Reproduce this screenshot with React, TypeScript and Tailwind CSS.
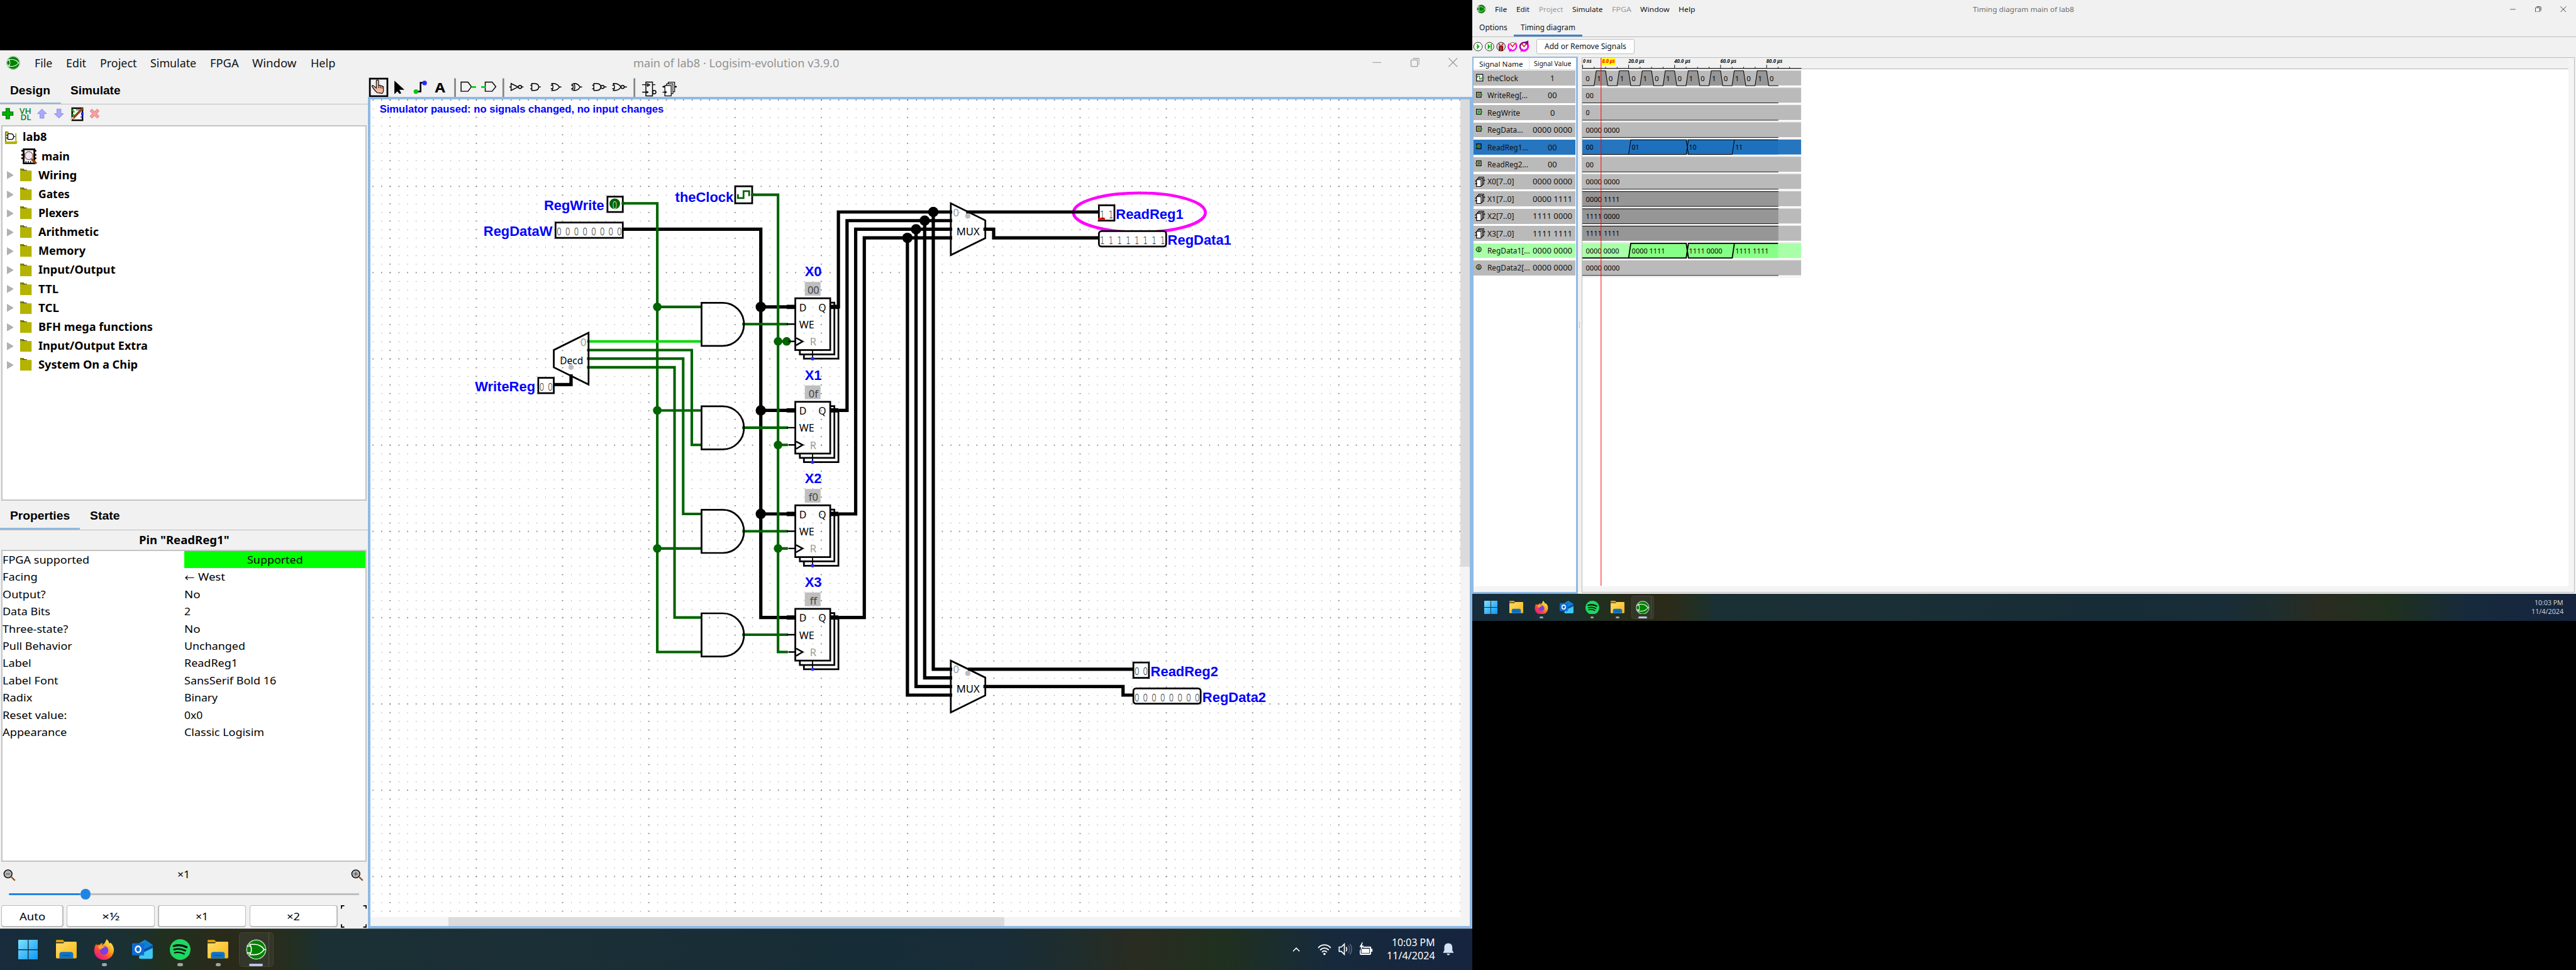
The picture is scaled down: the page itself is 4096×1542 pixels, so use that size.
import { useLayoutEffect, useRef, type ReactNode } from "react";

const UI = "font-['Noto_Sans','Open_Sans',sans-serif]";
const ARIAL = "font-['Liberation_Sans',Arial,sans-serif]";

/* Single-line text stretched horizontally to an exact width. */
function Fit({ w, className = "", children }: { w: number; className?: string; children: ReactNode }) {
  const outer = useRef<HTMLSpanElement>(null);
  const inner = useRef<HTMLSpanElement>(null);
  useLayoutEffect(() => {
    if (!outer.current || !inner.current) return;
    inner.current.style.transform = "none";
    const a = outer.current.getBoundingClientRect().width;
    const b = inner.current.getBoundingClientRect().width;
    if (b > 0) inner.current.style.transform = `scaleX(${a / b})`;
  }, [w, children]);
  return (
    <span ref={outer} style={{ width: w }} className={`inline-block shrink-0 whitespace-nowrap ${className}`}>
      <span ref={inner} className="inline-block origin-left">{children}</span>
    </span>
  );
}

function LogisimIcon({ className }: { className: string }) {
  return (
    <svg viewBox="0 0 24 24" className={className}>
      <circle cx="12" cy="12" r="11.6" fill="#e8f2e8" stroke="#3f7f3f" strokeWidth="0.5" />
      <circle cx="12" cy="12" r="10.6" fill="#008000" />
      <path d="M1 8 H6 M1 16 H6 M4.5 6 H10.5 C15 6 19.5 9 21 12 C19.5 15 15 18 10.5 18 H4.5 C7 14.5 7 9.5 4.5 6 Z M20.5 12 H23" fill="none" stroke="#fff" strokeWidth="1.2" />
    </svg>
  );
}

function WindowButtons({ className, gap }: { className: string; gap: string }) {
  return (
    <div className={`flex items-center ${gap}`}>
      <svg viewBox="0 0 16 16" className={className} fill="none" stroke="currentColor"><path d="M0.5 8 H15.5" /></svg>
      <svg viewBox="0 0 16 16" className={className} fill="none" stroke="currentColor" strokeWidth="1.2">
        <rect x="0.7" y="3.5" width="11.5" height="11.5" rx="1.5" />
        <path d="M4 0.8 H12.5 Q15.3 0.8 15.3 3.5 V12" />
      </svg>
      <svg viewBox="0 0 16 16" className={className} fill="none" stroke="currentColor" strokeWidth="1.2"><path d="M0.5 0.5 L15.5 15.5 M15.5 0.5 L0.5 15.5" /></svg>
    </div>
  );
}

/* ------------------------------------------------------------------ */
/* Taskbar                                                             */
/* ------------------------------------------------------------------ */

function WinIcon() {
  return (
    <svg viewBox="0 0 23 23" className="size-[23px]">
      <defs>
        <linearGradient id="win" x1="0" y1="0" x2="1" y2="1">
          <stop offset="0" stopColor="#7fe0ff" />
          <stop offset="1" stopColor="#0a97f5" />
        </linearGradient>
      </defs>
      <path d="M0 .8 Q0 0 .8 0 H11 V11 H0Z M12 0 H22.2 Q23 0 23 .8 V11 H12Z M0 12 H11 V23 H.8 Q0 23 0 22.2Z M12 12 H23 V22.2 Q23 23 22.2 23 H12Z" fill="url(#win)" />
    </svg>
  );
}

function FolderIcon() {
  return (
    <svg viewBox="0 0 24 22" className="h-[22px] w-[24px]">
      <defs>
        <linearGradient id="fold" x1="0" y1="0" x2="1" y2="1">
          <stop offset="0" stopColor="#ffdc6b" />
          <stop offset="1" stopColor="#fbb812" />
        </linearGradient>
      </defs>
      <path d="M0 1 Q0 0 1 0 H8 L10.5 3 H0Z" fill="#e09b00" />
      <path d="M0 4 H8.5 L10.5 2.2 H23 Q24 2.2 24 3.2 V20.5 Q24 21.5 23 21.5 H1 Q0 21.5 0 20.5Z" fill="url(#fold)" />
      <path d="M4 21.5 V17 Q4 14 7 14 H17 Q20 14 20 17 V21.5Z" fill="#0f73c8" />
      <path d="M7.5 18 H16.5" stroke="#0a4f91" strokeWidth="0.9" />
    </svg>
  );
}

function FirefoxIcon() {
  return (
    <svg viewBox="0 0 24 24" className="size-[24px]">
      <defs>
        <linearGradient id="ff" x1="0.85" y1="0.1" x2="0.2" y2="0.95">
          <stop offset="0" stopColor="#fff24a" />
          <stop offset="0.4" stopColor="#ff9a20" />
          <stop offset="0.7" stopColor="#ff4040" />
          <stop offset="1" stopColor="#e01890" />
        </linearGradient>
      </defs>
      <path d="M14.8 0 C17 1.5 18 4 18.2 5 C19.2 4.8 19.5 4 19.5 4 C22.5 7 23.6 10 23.4 13 C23 19.5 18 24 12 24 C5.5 24 .5 19.5 .5 13 C.5 9.500 1.800 7 3.200 5.200 L3.600 7.400 C4.500 6.500 6 6.300 7 6.600 C8 4.800 9.500 4.300 10.500 4.300 C10 5 9.700 5.800 9.800 6.600 C12 6 13.500 4 14.800 0Z" fill="url(#ff)" />
      <circle cx="12" cy="13" r="5" fill="#7a3fe0" />
      <path d="M5 8.500 C8 6.500 11 8.500 13.500 9 C11.500 10.200 9.500 10 8.500 12 C7.500 12.500 6 11 5 8.500Z" fill="#ffa52e" />
    </svg>
  );
}

function OutlookIcon() {
  return (
    <svg viewBox="0 0 24 22" className="h-[22px] w-[24px]">
      <path d="M5 6 L15 0 L24 6 V10 H5Z" fill="#28a8ea" />
      <path d="M9 5 L15 0 L24 6 L16 13 H10Z" fill="#0f7fd6" />
      <path d="M24 6 V10 L12 16 V12Z" fill="#0a4fa0" />
      <path d="M24 9.500 L10 16 L8 20 Q8 22 10 22 H22 Q24 22 24 20Z" fill="#3fc8f5" />
      <rect x="0" y="4" width="14" height="14" rx="1.200" fill="#0f6cd0" />
      <ellipse cx="7" cy="11" rx="3" ry="3.500" fill="none" stroke="#fff" strokeWidth="1.700" />
    </svg>
  );
}

function SpotifyIcon() {
  return (
    <svg viewBox="0 0 24 24" className="size-[24px]">
      <circle cx="12" cy="12" r="12" fill="#1ed760" />
      <g fill="none" stroke="#0b0b0b" strokeLinecap="round">
        <path d="M4.500 8 C9 6.500 15 7 19.500 9.300" strokeWidth="2.300" />
        <path d="M5 12 C9 10.800 14 11.300 18 13.300" strokeWidth="1.900" />
        <path d="M5.500 15.700 C9 14.700 13 15.200 16.600 17" strokeWidth="1.600" />
      </g>
    </svg>
  );
}

function TaskSlot({ children, dot = false }: { children: ReactNode; dot?: boolean }) {
  return (
    <div className="relative flex h-[48px] w-[44px] items-center justify-center">
      {children}
      {dot && <div className="absolute bottom-[5px] h-[3px] w-[6px] rounded-full bg-[#9ea5a5]" />}
    </div>
  );
}

function Taskbar({ tray = false }: { tray?: boolean }) {
  return (
    <div className={`flex h-[48px] w-full items-center ${UI} bg-[linear-gradient(90deg,#172b3c_0%,#182f36_6%,#1b3030_9%,#20301f_11%,#2a2a1a_15%,#2c2b1a_18%,#222f22_20%,#1a3034_22%,#1b2f36_36%,#162c36_60%,#182d37_68%,#1f2d2c_73%,#292c21_77%,#20301f_83%,#1b2e2a_86%,#172a3c_90%,#16243f_100%)]`}>
      <div className="flex items-center pl-[10.500px]">
        <TaskSlot><WinIcon /></TaskSlot>
        <div className="w-[0.500px]" />
        <TaskSlot><FolderIcon /></TaskSlot>
        <TaskSlot dot><FirefoxIcon /></TaskSlot>
        <TaskSlot><OutlookIcon /></TaskSlot>
        <TaskSlot dot><SpotifyIcon /></TaskSlot>
        <TaskSlot dot><FolderIcon /></TaskSlot>
        <div className="relative ml-[2px] flex h-[40px] w-[40px] items-center justify-center rounded-[4px] border border-[#414532] bg-[#34362a]">
          <div className="absolute right-[4px] top-0 h-full w-px bg-[#50523f]" />
          <LogisimIcon className="relative size-[24px]" />
          <div className="absolute bottom-0 h-[3px] w-[16px] rounded-full bg-[#b9c6ea]" />
        </div>
      </div>
      <div className="flex-1" />
      {tray && (
        <div className="flex items-center text-white">
          <svg viewBox="0 0 10 6" className="mr-[20px] h-[5px] w-[9px]" fill="none" stroke="currentColor" strokeWidth="1.300"><path d="M.5 5.500 L5 1 L9.500 5.500" /></svg>
          <svg viewBox="0 0 16 14" className="mr-[8px] h-[14px] w-[16px]" fill="none" stroke="currentColor" strokeWidth="1.300">
            <path d="M.8 5 C4.500 .5 11.500 .5 15.200 5 M3 7.600 C5.800 4.300 10.200 4.300 13 7.600 M5.200 10 C6.800 8 9.200 8 10.800 10" />
            <circle cx="8" cy="12" r="1.300" fill="currentColor" stroke="none" />
          </svg>
          <svg viewBox="0 0 16 16" className="mr-[8px] size-[16px]" fill="none" stroke="currentColor" strokeWidth="1.200">
            <path d="M1 5.500 H3.500 L7 2 V14 L3.500 10.500 H1Z M9 5.500 C10 7 10 9 9 10.500" />
            <path d="M11.500 3.500 C13.500 6 13.500 10 11.500 12.500 M13.500 2 C16 5 16 11 13.500 14" stroke="#5d6b80" strokeWidth="1" />
          </svg>
          <svg viewBox="0 0 16 16" className="mr-[16px] size-[16px]" fill="currentColor">
            <path d="M4 5 H13 Q14 5 14 6 V7.500 H15.500 V11 H14 V13 Q14 14.500 12.500 14.500 H2 Q.8 14.500 .8 13 V9 H2 V13 H12.500 V6.300 H5Z" />
            <rect x="2.800" y="7.500" width="9" height="4.800" />
            <path d="M3.500 0 L.5 5.500 H2.500 L1.500 9 L5.500 3.800 H3.300 L4.300 0Z" />
          </svg>
        </div>
      )}
      <div className={`flex flex-col items-end text-[11.500px] leading-[16px] ${tray ? "text-white" : "text-[#c8d0d3] mr-[22px]"}`}>
        <Fit w={50}>10:03 PM</Fit>
        <Fit w={56}>11/4/2024</Fit>
      </div>
      {tray && (
        <svg viewBox="0 0 14 16" className="mr-[21px] ml-[9px] h-[16px] w-[13px]" fill="#d6e2f5">
          <path d="M7 .5 C10.500 .5 12 3 12 6 V9.500 L13.500 12 V12.500 H.5 V12 L2 9.500 V6 C2 3 3.500 .5 7 .5Z M5 13.500 H9 Q8.500 15.500 7 15.500 Q5.500 15.500 5 13.500Z" />
        </svg>
      )}
    </div>
  );
}

/* ------------------------------------------------------------------ */
/* Left panel of the main window                                       */
/* ------------------------------------------------------------------ */

const MENU: [string, number, number][] = [
  ["File", 31, 55], ["Edit", 35, 59], ["Project", 64, 87.5], ["Simulate", 80, 104], ["FPGA", 50, 73], ["Window", 77, 102], ["Help", 43, 60],
];

const LIBS: [string, number][] = [
  ["Wiring", 67], ["Gates", 54.500], ["Plexers", 70.500], ["Arithmetic", 105], ["Memory", 82], ["Input/Output", 134],
  ["TTL", 35], ["TCL", 36], ["BFH mega functions", 199], ["Input/Output Extra", 190], ["System On a Chip", 173],
];

const PROPS: [string, number, string, number][] = [
  ["Output?", 75, "No", 28],
  ["Data Bits", 83, "2", 11],
  ["Three-state?", 114, "No", 28],
  ["Pull Behavior", 121, "Unchanged", 106],
  ["Label", 50, "ReadReg1", 93],
  ["Label Font", 97, "SansSerif Bold 16", 160],
  ["Radix", 52, "Binary", 58],
  ["Reset value:", 112, "0x0", 32],
  ["Appearance", 112, "Classic Logisim", 139],
];

function ExplorerTools() {
  return (
    <svg viewBox="0 182 180 36" className="h-[36px] w-[180px]">
      <path d="M10.500 189 H16.500 V195 H22.500 V201 H16.500 V207 H10.500 V201 H4.500 V195 H10.500Z" fill="#00b400" stroke="#007a00" strokeWidth="1.500" />
      <g className={UI} fill="#007a00" fontSize="14" fontWeight="500">
        <text x="34" y="198" textLength="20.500" lengthAdjust="spacingAndGlyphs">VH</text>
        <text x="35.500" y="209.500" textLength="18.500" lengthAdjust="spacingAndGlyphs">DL</text>
      </g>
      <path d="M73 190 L81 198 H76.500 V206 H69.500 V198 H65Z" fill="#a9a9ff" stroke="#8a8ae0" />
      <path d="M102.500 206 L94.500 198 H99 V190 H106 V198 H110.500Z" fill="#a9a9ff" stroke="#8a8ae0" />
      <rect x="125.500" y="188.500" width="18" height="21" fill="#fff" stroke="#000" strokeWidth="2.600" />
      <path d="M126 191 L129 196 M126 199 L129 202" stroke="#00c000" strokeWidth="3" />
      <path d="M143 196 V201 M142 203 V205" stroke="#2222ff" strokeWidth="4" />
      <path d="M132 191 H139" stroke="#888" strokeWidth="3" />
      <path d="M144 188.500 L127 206" stroke="#8b4513" strokeWidth="4" />
      <path d="M127 204 L123 209" stroke="#e8c8a0" strokeWidth="3" />
      <path d="M158 191.500 L171 204.500 M171 191.500 L158 204.500" stroke="#e07878" strokeWidth="5.500" />
      <path d="M158.700 192.200 L170.300 203.800 M170.300 192.200 L158.700 203.800" stroke="#ffa0a0" strokeWidth="3.500" />
    </svg>
  );
}

function Explorer() {
  return (
    <div className="ml-[2px] h-[653px] w-[636px] bg-[#c4c4c4] p-[2px]">
      <div className={`h-full bg-white pt-[2.500px] text-[18.500px] font-bold leading-[33px] text-black ${UI}`}>
        <div className="flex h-[33px] items-center pl-[4px]">
          <svg viewBox="0 0 24 24" className="mr-[7px] size-[24px]">
            <path d="M1 1 H6 L9 4 H3.500 V21 H1Z" fill="#8a8a00" />
            <rect x="3.500" y="4" width="16" height="14" fill="#fff" />
            <path d="M6 5 H11 Q16 5 16 10 Q16 15 11 15 H6Z M3 7.500 H6 M3 12.500 H6 M16 10 H19" fill="none" stroke="#000" strokeWidth="1.400" />
            <path d="M20 4 V18" stroke="#8a8a00" strokeWidth="1.500" />
            <path d="M1 19 L23 18 L21 23 H1Z" fill="#b3b300" />
          </svg>
          <Fit w={42}>lab8</Fit>
        </div>
        <div className="flex h-[33px] items-center pl-[33px]">
          <svg viewBox="0 0 28 28" className="mr-[7px] size-[28px]">
            <rect x="4" y="1.500" width="18.500" height="24.500" fill="#fff" stroke="#000" strokeWidth="3" />
            <path d="M0 4 H4 M0 11 H4 M0 17 H4 M23 4 H26 M23 11 H26 M23 17 H26" stroke="#000" strokeWidth="3" />
            <path d="M8 22 V25 M12 22 V25 M16 22 V25" stroke="#000" strokeWidth="1.500" />
            <circle cx="13" cy="12.500" r="7" fill="#e8e8ff" stroke="#a0643c" strokeWidth="1.600" />
            <path d="M18 18.500 L26 26.500" stroke="#8b4513" strokeWidth="4" />
          </svg>
          <Fit w={49}>main</Fit>
        </div>
        {LIBS.map(([name, w]) => (
          <div key={name} className="flex h-[33px] items-center pl-[7.500px]">
            <svg viewBox="0 0 12 14" className="mr-[12px] h-[14px] w-[12px]"><path d="M0 0 L12 7 L0 14Z" fill="#b0b0b0" /></svg>
            <svg viewBox="0 0 20 24" className="mr-[11px] h-[24px] w-[20px]">
              <path d="M0 0 H6 L9 4 H0Z" fill="#808000" />
              <path d="M5 3 H12" stroke="#222" strokeWidth="1.200" />
              <rect x="0" y="3.500" width="20" height="18.500" fill="#b3b300" />
            </svg>
            <Fit w={w}>{name}</Fit>
          </div>
        ))}
      </div>
    </div>
  );
}

function Magnifier({ plus = false }: { plus?: boolean }) {
  return (
    <svg viewBox="0 0 22 22" className="size-[22px]" fill="none">
      <circle cx="8.500" cy="9" r="7" fill="#b4b4b4" stroke="#000" strokeWidth="1.500" />
      <path d={plus ? "M5 9 H12 M8.500 5.500 V12.500" : "M5 9 H12"} stroke="#444" strokeWidth="1.200" />
      <path d="M14.500 14.500 L20.500 20.500" stroke="#8b4513" strokeWidth="2.500" />
    </svg>
  );
}

function Tabs({ first, w1, second, w2, width, pad }: { first: string; w1: number; second: string; w2: number; width: string; pad: string }) {
  return (
    <div className={`flex h-[51px] border-b border-[#bdbdbd] text-[20.500px] font-bold text-black ${ARIAL}`}>
      <div className={`flex flex-col ${width}`}>
        <div className="flex h-[47px] items-center pl-[18px] pt-[6px]"><Fit w={w1}>{first}</Fit></div>
        <div className="h-[3px] bg-[#93b9de]" />
      </div>
      <div className={`flex h-[47px] items-center pt-[6px] ${pad}`}><Fit w={w2}>{second}</Fit></div>
    </div>
  );
}

function ZoomButton({ width, w, children }: { width: string; w: number; children: string }) {
  return (
    <div className={`h-[38px] rounded-[4px] bg-[#bcbcbc] p-[1.500px] ${width}`}>
      <div className="flex h-full items-center justify-center rounded-[3px] bg-white"><Fit w={w}>{children}</Fit></div>
    </div>
  );
}

function LeftPanel() {
  return (
    <div className={`flex w-[640px] flex-col ${UI} text-black`}>
      <Tabs first="Design" w1={70} second="Simulate" w2={87} width="w-[106px]" pad="pl-[17px]" />
      <div className="h-[36px]"><ExplorerTools /></div>
      <Explorer />
      <Tabs first="Properties" w1={104} second="State" w2={52} width="w-[139px]" pad="pl-[17px]" />
      <div className="flex h-[34px] items-center justify-center text-[18.500px] font-bold"><Fit w={157}>Pin "ReadReg1"</Fit></div>
      <div className="ml-[2px] h-[542px] w-[636px] bg-[#c4c4c4] p-[2px]">
        <div className="h-full bg-white text-[18.500px] leading-[30px]">
          <div className="flex h-[30px]">
            <div className="w-[316px]"><Fit w={151}>FPGA supported</Fit></div>
            <div className="flex flex-1 justify-center bg-[#00ff00]"><Fit w={97}>Supported</Fit></div>
          </div>
          <div className="flex h-[30px]">
            <div className="w-[318px]"><Fit w={61}>Facing</Fit></div>
            <svg viewBox="0 0 16 12" className="mt-[11px] mr-[7px] h-[12px] w-[16px]" fill="none" stroke="#000" strokeWidth="1.300">
              <path d="M1 6 H16 M5 2.500 L1 6 L5 9.500" />
            </svg>
            <Fit w={47}>West</Fit>
          </div>
          {PROPS.map(([k, kw, v, vw]) => (
            <div key={k} className="flex h-[30px]">
              <div className="w-[317px]"><Fit w={kw}>{k}</Fit></div>
              <Fit w={vw}>{v}</Fit>
            </div>
          ))}
        </div>
      </div>
      <div className="flex h-[46px] items-center justify-between pl-[6px] pr-[8px] text-[18px]">
        <Magnifier /><Fit w={22}>×1</Fit><Magnifier plus />
      </div>
      <div className="flex h-[22px] items-center pl-[15px]">
        <div className="h-[3px] w-[125px] rounded bg-[#2284e2]" />
        <div className="size-[18px] rounded-full bg-[#2284e2]" />
        <div className="h-[3px] w-[467px] bg-[#bfbfbf]" />
      </div>
      <div className="flex gap-[6px] pl-[2px] pt-[8px] text-[18.500px]">
        <ZoomButton width="w-[108px]" w={45}>Auto</ZoomButton>
        <ZoomButton width="w-[153px]" w={31}>×½</ZoomButton>
        <ZoomButton width="w-[153px]" w={22}>×1</ZoomButton>
        <ZoomButton width="w-[153px]" w={23}>×2</ZoomButton>
        <svg viewBox="0 0 45 39" className="h-[39px] w-[45px]" fill="none" stroke="#000" strokeWidth="2">
          <path d="M1 6 V1 H6 M39 1 H44 V6 M44 33 V38 H39 M6 38 H1 V33" />
        </svg>
      </div>
    </div>
  );
}

/* ------------------------------------------------------------------ */
/* Circuit canvas                                                      */
/* ------------------------------------------------------------------ */

function ToolStrip() {
  return (
    <svg viewBox="640 131 560 38" className="h-[38px] w-[560px]" fill="none" stroke="#000" strokeWidth="1.600">
      <rect x="643.300" y="136.500" width="30.500" height="30.500" strokeWidth="3" />
      <path d="M656 161 C651 156 648 152 647 149 Q648.500 147.500 651 150 L654.500 153 V140 Q656.500 137.500 658.500 140 V148 L661 148 L664 149 L667 150.500 V157 Q667 160 665 162Z" fill="#f2b7a0" strokeWidth="1.200" />
      <path d="M658.500 148 V153 M661.500 149 V153 M664.500 150 V154" strokeWidth="1" />
      <path d="M686 140 V163.500 L691 158.500 L695 163 L698 162 L694.500 156 H703.500Z" fill="#000" stroke="none" />
      <path d="M723 159 H731.500 V143.500 H738" strokeWidth="2.800" />
      <circle cx="723.500" cy="159" r="4" fill="#00c800" stroke="none" />
      <circle cx="738.500" cy="144" r="4" fill="#2828ff" stroke="none" />
      <text x="756.500" y="160" textLength="18" lengthAdjust="spacingAndGlyphs" fontSize="24" fontWeight="700" fill="#000" stroke="none" className={UI}>A</text>
      <path d="M791.500 136 V169 M875.500 136 V169 M1103.500 136 V169" stroke="#858585" strokeWidth="3" />
      <path d="M802 142.500 H814 L820 150.500 L814 158.500 H802Z M844 142.500 H856 L862.500 150.500 L856 158.500 H844Z" />
      <path d="M820 151 H828 M837 151 H845" stroke="#00d200" strokeWidth="3" />
      <path d="M886 151 H889 M889 145 V157 L901 151Z M907.500 151 H910.500" />
      <circle cx="904.500" cy="151" r="2.800" />
      <path d="M925 145 H930 Q937 145.500 937 151 Q937 156.500 930 157 H925Z M922.500 148 H925 M922.500 154 H925 M937 151 H940.500" />
      <path d="M960 145 H964 Q970 146 973 151 Q970 156 964 157 H960 Q964 151 960 145Z M958 148 H961.500 M958 154 H961.500 M973 151 H976.500" />
      <path d="M998 145 H1001 Q1006 146 1009 151 Q1006 156 1001 157 H998 Q1002 151 998 145Z M995 145 Q999 151 995 157 M993.500 148 H997 M993.500 154 H997 M1009 151 H1012.500" />
      <path d="M1033 145 H1038 Q1045 145.500 1045 151 Q1045 156.500 1038 157 H1033Z M1030 148 H1033 M1030 154 H1033 M1051 151 H1055" />
      <circle cx="1048" cy="151" r="2.800" />
      <path d="M1067 145 H1071 Q1077 146 1080 151 Q1077 156 1071 157 H1067 Q1071 151 1067 145Z M1065 148 H1068.500 M1065 154 H1068.500 M1086 151 H1090.500" />
      <circle cx="1083" cy="151" r="2.800" />
      <path d="M1123.500 142.500 H1135 V166.500 H1123.500Z M1117 147 H1123.500 M1117 160 H1127 M1135 147 H1140 M1126 145 V150 M1126 145 L1130 147.500 L1126 150" />
      <circle cx="1138" cy="160" r="3" />
      <path d="M1125 157.500 L1128.500 160 L1125 162.500Z" fill="#000" stroke="none" />
      <path d="M1152.500 150.500 H1158 M1166 150.500 H1177" strokeWidth="2.600" />
      <rect x="1162.500" y="142.700" width="11" height="16.500" fill="#fff" strokeWidth="1.300" />
      <rect x="1159.500" y="145.500" width="11" height="17" fill="#fff" strokeWidth="1.300" />
      <rect x="1156.500" y="148.500" width="11" height="18" fill="#fff" strokeWidth="1.400" />
      <path d="M1152.500 160 H1157" strokeWidth="1.400" />
      <path d="M1157 157.500 L1160.500 160 L1157 162.500Z" fill="#000" stroke="none" />
    </svg>
  );
}

const G = "#006400";

function Bits({ x, y, bits, fill = "#000" }: { x: number; y: number; bits: string; fill?: string }) {
  return (
    <g className="font-['DejaVu_Sans',sans-serif]" fill={fill} fontSize="11" fontWeight="200">
      {bits.split("").map((b, i) => (
        <text key={i} x={x + i * 10 - 2.900} y={y} textLength="5.800" lengthAdjust="spacingAndGlyphs">{b}</text>
      ))}
    </g>
  );
}

function Label({ x, y, end = false, children }: { x: number; y: number; end?: boolean; children: string }) {
  return (
    <text x={x} y={y} fontSize="16" fontWeight="700" fill="#0000ff" textAnchor={end ? "end" : "start"} className={ARIAL}>{children}</text>
  );
}

function Register({ y, name, value, top }: { y: number; name: string; value: string; top: number }) {
  return (
    <g fill="none" stroke="#000" strokeWidth="2">
      <rect x="470" y={y} width="40.500" height="60" />
      <path d={`M510 ${y + 5} H515.300 V${y + 65} H475.300 V${y + 60} M515 ${y + 10} H520 V${y + 70} H480 V${y + 65}`} />
      <path d={`M490 ${y + 60} V${y + 70}`} strokeWidth="1.300" />
      <path d={`M460 ${y + 10} H470 M510 ${y + 10} H520`} strokeWidth="5" />
      <path d={`M460 ${y + 30} H470 M462 ${y + 50} H470`} strokeWidth="1.800" />
      <path d={`M471 ${y + 46} L478.500 ${y + 50} L471 ${y + 54.500}`} strokeWidth="1.800" />
      <circle cx="490" cy={y + 70} r="2" fill="#2828ff" stroke="none" />
      <rect x="481" y={y - 19} width="18.300" height="16" fill="#bfbfbf" stroke="none" />
      <g stroke="none" fill="#000" fontSize="12" className={UI}>
        <text x="474.500" y={y + 15} textLength="8.500" lengthAdjust="spacingAndGlyphs">D</text>
        <text x="496.800" y={y + 15} textLength="9" lengthAdjust="spacingAndGlyphs">Q</text>
        <text x="474.500" y={y + 34.800} textLength="17.500" lengthAdjust="spacingAndGlyphs">WE</text>
        <text x="487" y={y + 54.800} fill="#999">R</text>
        <text x="491" y={y - 5.200} fill="#444" textAnchor="middle">{value}</text>
      </g>
      <text x="490.800" y={top} stroke="none" fill="#0000ff" fontSize="16" fontWeight="700" textAnchor="middle" className={ARIAL}>{name}</text>
    </g>
  );
}

function Circuit() {
  return (
    <svg viewBox="644 173 1896 1422" className="h-[1422px] w-[1896px] bg-white">
      <defs>
        <pattern id="grid" x="678" y="174" width="15" height="15" patternUnits="userSpaceOnUse"><rect width="1.100" height="1.100" fill="#6e6e6e" /></pattern>
        <pattern id="gridMajor" x="677" y="173" width="150" height="150" patternUnits="userSpaceOnUse">
          {Array.from({ length: 10 }, (_, i) => (
            <g key={i} fill="#666">
              <rect x="0" y={i * 15 + 0.800} width="2" height="1.300" />
              <rect x={i * 15 + 1} y="0" width="1.200" height="2" />
            </g>
          ))}
        </pattern>
      </defs>
      <rect x="644" y="173" width="1896" height="1422" fill="url(#grid)" />
      <rect x="644" y="173" width="1896" height="1422" fill="url(#gridMajor)" />
      <text x="660" y="195.700" fontSize="17.500" fontWeight="700" fill="#0000ff" textLength="494" lengthAdjust="spacingAndGlyphs" className={ARIAL}>
        Simulator paused: no signals changed, no input changes
      </text>
      <g transform="translate(677.9 173.8) scale(1.5)">
        <ellipse cx="869" cy="130.700" rx="76.500" ry="22.800" fill="none" stroke="#ff00ff" strokeWidth="3.400" />
        <g fill="none" stroke="#000" strokeWidth="3.800" strokeLinecap="square">
          <path d="M271 150 H430 V600 H460 M430 240 H460 M430 360 H460 M430 480 H460" />
          <path d="M191 330 H210 V320" />
          <path d="M520 240 V130 H650 M522 360 H530 V140 H650 M522 480 H540 V150 H650 M522 600 H550 V160 H650" />
          <path d="M630 130 V660 H650 M620 140 V670 H650 M610 150 V680 H650 M600 160 V690 H650" />
          <path d="M670 130 H821 M690 150 H700 V160 H821 M672 660 H861 M690 680 H850 V690 H861" />
        </g>
        <g fill="none" stroke={G} strokeWidth="3" strokeLinecap="square">
          <path d="M271 120 H310 V640 H360 M310 240 H360 M310 360 H360 M310 520 H360" />
          <path d="M230 290 H350 V400 H360 M230 300 H340 V480 H360 M230 310 H330 V600 H360" />
          <path d="M410 260 H460 M410 380 H460 M410 500 H460 M410 620 H460" />
          <path d="M421 110 H450 V640 H460 M450 280 H460 M450 400 H460 M450 520 H460" />
          <path d="M230 280 H360" stroke="#00d800" />
        </g>
        <g fill="#000">
          <circle cx="430" cy="240" r="6" /><circle cx="430" cy="360" r="6" /><circle cx="430" cy="480" r="6" />
          <circle cx="630" cy="130" r="6" /><circle cx="620" cy="140" r="6" /><circle cx="610" cy="150" r="6" /><circle cx="600" cy="160" r="6" />
        </g>
        <g fill={G}>
          <circle cx="310" cy="240" r="5" /><circle cx="310" cy="360" r="5" /><circle cx="310" cy="520" r="5" />
          <circle cx="450" cy="280" r="5" /><circle cx="460" cy="280" r="5" /><circle cx="450" cy="400" r="5" /><circle cx="450" cy="520" r="5" />
        </g>
        {[260, 380, 500, 620].map((y) => (
          <path key={y} d={`M386 ${y - 24.800} H361.300 V${y + 25.200} H386 A24.500 25 0 0 0 386 ${y - 24.800}Z`} fill="none" stroke="#000" strokeWidth="2" />
        ))}
        <Register y={230} top={204.500} name="X0" value="00" />
        <Register y={350} top={324.500} name="X1" value="0f" />
        <Register y={470} top={444.500} name="X2" value="f0" />
        <Register y={590} top={564.500} name="X3" value="ff" />

        <g fill="none" stroke="#000" strokeWidth="2">
          <path d="M230.300 270 L190 290 V310 L230.300 330Z" />
          <path d="M650.300 120 L690.300 139.700 V160.300 L650.300 180Z M650.300 650 L690.300 669.700 V690.300 L650.300 710Z" />
          <rect x="252.200" y="112.200" width="17.800" height="17.800" fill="#fff" />
          <rect x="192" y="142.200" width="78" height="17.800" fill="#fff" />
          <rect x="400.300" y="100.200" width="19.700" height="19.700" fill="#fff" />
          <rect x="172" y="322.200" width="18" height="17.800" fill="#fff" />
          <rect x="822" y="122.200" width="18" height="17.800" fill="#fff" />
          <rect x="822" y="152.200" width="78" height="17.800" rx="3" fill="#fff" />
          <rect x="862" y="652.200" width="18" height="17.800" fill="#fff" />
          <rect x="862" y="682.200" width="78" height="17.800" rx="3" fill="#fff" />
        </g>
        <path d="M403.500 109.400 V113.900 H410 V105.900 H416.500 V111.500" fill="none" stroke={G} strokeWidth="2" />
        <g fill={G}><circle cx="270.500" cy="120" r="2" /><circle cx="420.500" cy="110" r="2" /></g>
        <circle cx="260.700" cy="120.500" r="6.200" fill={G} />
        <Bits x={260.700} y={126.600} bits="0" fill="#fff" />
        <circle cx="210" cy="310" r="3" fill="#bdbdbd" />
        <circle cx="670" cy="134.800" r="3" fill="#bdbdbd" />
        <circle cx="670" cy="664.800" r="3" fill="#bdbdbd" />
        <g fontSize="12" className={UI}>
          <text x="224.300" y="285" fill="#999" textAnchor="middle">0</text>
          <text x="656.400" y="135" fill="#999" textAnchor="middle">0</text>
          <text x="656.400" y="664.800" fill="#999" textAnchor="middle">0</text>
          <text x="197" y="306.800" textLength="27" lengthAdjust="spacingAndGlyphs">Decd</text>
          <text x="656.800" y="157" textLength="27" lengthAdjust="spacingAndGlyphs">MUX</text>
          <text x="656.800" y="687" textLength="27" lengthAdjust="spacingAndGlyphs">MUX</text>
        </g>
        <Bits x={196.200} y={157} bits="00000000" />
        <Bits x={176} y={337} bits="00" />
        <rect x="821" y="136.800" width="8" height="2.400" fill="#ff0000" />
        <Bits x={826} y={137} bits="11" />
        <Bits x={826} y={167} bits="11111111" />
        <Bits x={866} y={667} bits="00" />
        <Bits x={866} y={697} bits="00000000" />
        <Label x={248.500} y={128} end>RegWrite</Label>
        <Label x={188.500} y={158} end>RegDataW</Label>
        <Label x={398.300} y={118} end>theClock</Label>
        <Label x={168.500} y={338} end>WriteReg</Label>
        <Label x={841.700} y={138.200}>ReadReg1</Label>
        <Label x={901.700} y={168.200}>RegData1</Label>
        <Label x={882} y={668.200}>ReadReg2</Label>
        <Label x={942} y={698.200}>RegData2</Label>
      </g>
    </svg>
  );
}

function MainWindow() {
  return (
    <div className={`flex h-[1527px] w-[2560px] flex-col bg-[#f1f1f1] ${UI}`}>
      <div className="flex h-[44px] items-center text-[19px] text-[#111]">
        <div className="flex w-[1101px] items-center pl-[11px]">
          <LogisimIcon className="mr-[25px] size-[24px]" />
          {MENU.map(([m, w, slot]) => (
            <div key={m} style={{ width: slot }}><Fit w={w}>{m}</Fit></div>
          ))}
        </div>
        <div className="w-[1286px] text-[#929292]"><Fit w={358}>main of lab8 · Logisim-evolution v3.9.0</Fit></div>
        <div className="text-[#8c8c8c]"><WindowButtons className="size-[16px]" gap="gap-[50px]" /></div>
      </div>
      <div className="flex flex-1">
        <LeftPanel />
        <div className="flex w-[1920px] flex-col">
          <div className="h-[38px]"><ToolStrip /></div>
          <div className="h-[1445px] w-[1920px] bg-[#8fbae6] p-[4px]">
            <div className="h-full bg-[#f4f4f4]">
              <div className="flex h-[1422px]">
                <Circuit />
                <div className="w-[16px]"><div className="h-[813px] bg-[#dbdbdb]" /></div>
              </div>
              <div className="h-[15px] pl-[136px]"><div className="h-full w-[967px] bg-[#dbdbdb]" /></div>
            </div>
          </div>
        </div>
      </div>
    </div>
  );
}

/* ------------------------------------------------------------------ */
/* Timing diagram window                                               */
/* ------------------------------------------------------------------ */

const MENU2: [string, number, number, boolean][] = [
  ["File", 21, 37, true], ["Edit", 23, 39, true], ["Project", 42, 58.500, false], ["Simulate", 53, 69, true], ["FPGA", 34, 49, false], ["Window", 51, 67, true], ["Help", 29, 40, true],
];

type Kind = "clock" | "in" | "bit" | "out" | "reg" | "probe";
const SIGNALS: { name: string; nw: number; value: string; vw: number; kind: Kind; row: string }[] = [
  { name: "theClock", nw: 53.500, value: "1", vw: 7.500, kind: "clock", row: "bg-[#bababa]" },
  { name: "WriteReg[...", nw: 70, value: "00", vw: 16, kind: "in", row: "bg-[#bababa]" },
  { name: "RegWrite", nw: 57, value: "0", vw: 8, kind: "bit", row: "bg-[#bababa]" },
  { name: "RegData...", nw: 62, value: "0000 0000", vw: 69, kind: "in", row: "bg-[#bababa]" },
  { name: "ReadReg1...", nw: 71, value: "00", vw: 16, kind: "out", row: "bg-[#2675bf]" },
  { name: "ReadReg2...", nw: 71, value: "00", vw: 16, kind: "out", row: "bg-[#bababa]" },
  { name: "X0[7..0]", nw: 46.500, value: "0000 0000", vw: 69, kind: "reg", row: "bg-[#bababa]" },
  { name: "X1[7..0]", nw: 46.500, value: "0000 1111", vw: 69, kind: "reg", row: "bg-[#bababa]" },
  { name: "X2[7..0]", nw: 46.500, value: "1111 0000", vw: 69, kind: "reg", row: "bg-[#bababa]" },
  { name: "X3[7..0]", nw: 46.500, value: "1111 1111", vw: 69, kind: "reg", row: "bg-[#bababa]" },
  { name: "RegData1[...", nw: 74, value: "0000 0000", vw: 69, kind: "probe", row: "bg-[#a8ffa8]" },
  { name: "RegData2[...", nw: 74, value: "0000 0000", vw: 69, kind: "probe", row: "bg-[#bababa]" },
];

function SignalIcon({ kind }: { kind: Kind }) {
  return (
    <svg viewBox="0 0 18 18" className="size-[18px]" fill="none" stroke="#000" strokeWidth="1.300">
      {kind === "clock" && (
        <>
          <rect x="3" y="2.500" width="11" height="11.500" fill="#fff" />
          <path d="M5 8 V5.500 H8.500 V10.500 H11.500 V8" stroke="#007a00" />
          <path d="M14.500 8.500 H16.500" stroke="#00c800" strokeWidth="2" />
        </>
      )}
      {(kind === "in" || kind === "bit") && (
        <>
          <rect x="3" y="3" width="8" height="8.500" fill={kind === "in" ? "#bababa" : "#cfcfcf"} />
          <rect x="5" y="5" width="4" height="4.500" fill="#00b400" stroke="none" />
          {kind === "in" && <path d="M7.500 4.500 L5.500 8" stroke="#d05030" />}
          <path d="M11.500 7.300 H13.500" stroke="#00c800" strokeWidth="2" />
        </>
      )}
      {kind === "out" && (
        <>
          <rect x="3" y="3" width="8" height="8.500" />
          <rect x="5" y="5" width="4" height="4.500" fill="#008a00" stroke="none" />
          <path d="M7.500 4.500 L5.500 8" stroke="#d05030" />
          <path d="M1 7.300 H3" stroke="#00c800" strokeWidth="2" />
        </>
      )}
      {kind === "reg" && (
        <>
          <rect x="7" y="0.800" width="8.500" height="12" fill="#fff" />
          <rect x="5" y="2.800" width="8.500" height="12" fill="#fff" />
          <rect x="3" y="5" width="8" height="12" fill="#fff" />
          <path d="M0.500 7.500 H3 M15 6 H18 M0.500 12 H4" strokeWidth="1.600" />
        </>
      )}
      {kind === "probe" && (
        <>
          <circle cx="7" cy="7" r="4" />
          <rect x="5.500" y="4.500" width="3" height="5" fill="#008a00" stroke="none" />
          <path d="M7.500 4.500 L6 8" stroke="#d05030" />
          <path d="M1 7.300 H3" stroke="#00c800" strokeWidth="2" />
        </>
      )}
    </svg>
  );
}

function SimIcons() {
  const ring = { fill: "#fff", stroke: "#222", strokeWidth: 1 };
  return (
    <svg viewBox="0 0 104 22" className="h-[22px] w-[104px]" fill="none">
      <circle cx="10" cy="11" r="7.500" {...ring} /><path d="M8 6 L13 11 L8 16Z" fill="#00c000" />
      <circle cx="30" cy="11" r="7.500" {...ring} /><path d="M27 6 L31.500 11 L27 16Z M32 6 H34 V16 H32Z" fill="#00b000" />
      <circle cx="50" cy="11" r="7.500" fill="#d8d8d8" stroke="#222" /><path d="M46 6 L50 11 L54 5" stroke="#e00000" strokeWidth="1.500" /><path d="M48 10 V19 M52 10 V19" stroke="#7a0000" strokeWidth="3" />
      <circle cx="70" cy="11" r="7" fill="#fff" stroke="#555" /><path d="M66 6 L70 11 L74 6" stroke="#e00000" strokeWidth="1.500" /><path d="M75 4.500 C79 11 76 18.500 67 18 M64 6 C62 10 62.500 14 65 16.500" stroke="#ff00ff" strokeWidth="2.500" /><path d="M63 14.500 L69.500 15 L65 21Z" fill="#ff00ff" />
      <circle cx="90" cy="11" r="7" fill="#fff" stroke="#800080" strokeWidth="2.500" /><path d="M86 6 L90 11 L95 5" stroke="#e00000" strokeWidth="1.500" /><path d="M96.500 7 C99 13 95 18.500 87 18" stroke="#ff00ff" strokeWidth="3" /><path d="M91 3 L97.500 0.500 V7Z" fill="#800080" /><path d="M83 14.500 L89.500 15 L85 21Z" fill="#ff00ff" />
    </svg>
  );
}

function BusWave({ y, texts, hi, sw }: { y: number; texts: string[]; hi: string; sw: number }) {
  const t = y + 0.500, b = y + 26;
  return (
    <g>
      <path d={`M272.500 ${b} L276.300 ${t} H372.600 L374.500 ${y + 13} L372.600 ${b}Z M376.600 ${t} H456.500 L452.700 ${b} H376.600 L374.500 ${y + 13}Z M456.500 ${t} H532.500 V${b} H452.700Z`} fill={hi} />
      <path d={`M192 ${b} H272.500 L276.300 ${t} H372.600 L376.600 ${b} H452.700 L456.500 ${t} H532.500 M272.500 ${b} H372.600 L376.600 ${t} H456.500`} fill="none" stroke="#000" strokeWidth={sw} />
      {[198, 278, 377.500, 458].map((x, i) => (
        <text key={i} x={x} y={y + 18} textLength={texts[i].length === 2 ? 13 : 58} lengthAdjust="spacingAndGlyphs">{texts[i]}</text>
      ))}
    </g>
  );
}

function FlatWave({ y, text, w, mode }: { y: number; text: string; w: number; mode: "low" | "mixed" | "high" }) {
  return (
    <g>
      {mode !== "low" && <rect x="192" y={y} width="341" height="26" fill="#969696" />}
      <path d={`${mode !== "high" ? `M192 ${y + 26.300} H533` : ""} ${mode !== "low" ? `M192 ${y + 0.500} H533` : ""}`} stroke="#000" />
      <text x="198" y={y + 18} textLength={w} lengthAdjust="spacingAndGlyphs">{text}</text>
    </g>
  );
}

function Waves() {
  const clock: string[] = ["M192 149.300"];
  for (let k = 0; k < 8; k++) {
    const x = 192 + 40 * k;
    clock.push(`H${x + 20.400} L${x + 24.300} 123.500 H${x + 40.300} L${x + 44.300} 149.300`);
  }
  clock.push("H533");
  return (
    <svg viewBox="192 101 400 918" className="h-[918px] w-[400px]">
      <path d="M192 119.300 H573" stroke="#000" strokeWidth="1.300" />
      {Array.from({ length: 19 }, (_, i) => (
        <path key={i} d={`M${192.500 + i * 20} ${i % 4 === 0 ? 113 : 116.500} V119`} stroke="#000" strokeWidth="1" />
      ))}
      <g className={UI} fontSize="9" fontWeight="700" fontStyle="italic" fill="#111">
        <text x="193" y="110" textLength="15" lengthAdjust="spacingAndGlyphs">0 ns</text>
        <text x="272" y="110" textLength="28" lengthAdjust="spacingAndGlyphs">20.0 µs</text>
        <text x="352" y="110" textLength="28" lengthAdjust="spacingAndGlyphs">40.0 µs</text>
        <text x="432" y="110" textLength="28" lengthAdjust="spacingAndGlyphs">60.0 µs</text>
        <text x="512" y="110" textLength="28" lengthAdjust="spacingAndGlyphs">80.0 µs</text>
        <rect x="225" y="101.500" width="25" height="12" fill="#ffff00" />
        <text x="226.500" y="110" textLength="22" lengthAdjust="spacingAndGlyphs" fill="#ff0000">8.0 µs</text>
      </g>
      {SIGNALS.map((_, i) => (
        <g key={i}>
          <rect x="192" y={123 + i * 30} width="380.500" height="26" fill={i === 4 ? "#2675bf" : i === 10 ? "#a8ffa8" : "#bababa"} />
          <path d={`M192 ${152 + i * 30} H572.500`} stroke="#e6e6e6" />
        </g>
      ))}
      <g className={UI} fontSize="12.500" fill="#000">
        {Array.from({ length: 8 }, (_, k) => (
          <path key={k} d={`M${212.400 + 40 * k} 149.300 L${216.300 + 40 * k} 123.500 H${232.300 + 40 * k} L${236.300 + 40 * k} 149.300Z`} fill="#969696" />
        ))}
        <path d={clock.join(" ")} fill="none" stroke="#000" strokeWidth="1.100" />
        {Array.from({ length: 17 }, (_, k) => (
          <text key={k} x={201.300 + 20 * k - (k % 2 ? 0.300 : 0)} y="141" textAnchor="middle">{k % 2 ? "1" : "0"}</text>
        ))}
        <FlatWave y={153} text="00" w={13.500} mode="low" />
        <FlatWave y={183} text="0" w={6.500} mode="low" />
        <FlatWave y={213} text="0000 0000" w={59} mode="low" />
        <BusWave y={243} texts={["00", "01", "10", "11"]} hi="#1d70be" sw={1.100} />
        <FlatWave y={273} text="00" w={13.500} mode="low" />
        <FlatWave y={303} text="0000 0000" w={59} mode="low" />
        <FlatWave y={333} text="0000 1111" w={59} mode="mixed" />
        <FlatWave y={363} text="1111 0000" w={59} mode="mixed" />
        <FlatWave y={393} text="1111 1111" w={59} mode="high" />
        <BusWave y={423} texts={["0000 0000", "0000 1111", "1111 0000", "1111 1111"]} hi="#86ff86" sw={2} />
        <FlatWave y={453} text="0000 0000" w={59} mode="low" />
      </g>
      <path d="M224.600 101 V1019" stroke="#ff0000" strokeWidth="1.100" />
    </svg>
  );
}

function TimingWindow() {
  return (
    <div className={`flex h-[1032px] w-[1920px] flex-col bg-[#f1f1f1] ${UI} text-[#111]`}>
      <div className="flex h-[32px] items-center text-[12.500px]">
        <div className="flex w-[871px] items-center pl-[8px]">
          <LogisimIcon className="mr-[16px] size-[16px]" />
          {MENU2.map(([m, w, slot, on]) => (
            <div key={m} style={{ width: slot }} className={on ? "" : "text-[#999]"}><Fit w={w}>{m}</Fit></div>
          ))}
        </div>
        <div className="w-[934px] text-[#6c6c6c]"><Fit w={176}>Timing diagram main of lab8</Fit></div>
        <div className="text-black"><WindowButtons className="size-[10.500px]" gap="gap-[33.500px]" /></div>
      </div>
      <div className="flex h-[32px] border-b border-[#bdbdbd] text-[13px]">
        <div className="flex w-[73px] items-center pl-[12px] pt-[2px]"><Fit w={49}>Options</Fit></div>
        <div className="flex w-[119px] flex-col">
          <div className="flex h-[28.500px] items-center pl-[12px] pt-[5px]"><Fit w={95}>Timing diagram</Fit></div>
          <div className="h-[3px] bg-[#3d82c8]" />
        </div>
      </div>
      <div className="flex h-[34px] items-center text-[13px]">
        <SimIcons />
        <div className="ml-[8px] flex h-[26px] w-[171px] items-center justify-center rounded-[3px] border border-[#bfbfbf] bg-white"><Fit w={142}>Add or Remove Signals</Fit></div>
      </div>
      <div className="flex h-[934px]">
        <div className="w-[184px] bg-[#8fbae6] p-[3px]">
          <div className="h-full bg-white">
            <div className="flex h-[20px] items-center border-b border-[#d8d8d8] text-[12.500px]">
              <div className="flex h-full w-[97px] items-center border-r border-[#e0e0e0] pl-[10px] pt-[2px]"><Fit w={76}>Signal Name</Fit></div>
              <div className="flex flex-1 items-center pl-[8px]"><Fit w={65}>Signal Value</Fit></div>
            </div>
            <div className="flex flex-col gap-[4px] pt-[2px] text-[13px]">
              {SIGNALS.map((s) => (
                <div key={s.name} className={`flex h-[26px] w-[177px] items-center ${s.row}`}>
                  <div className="flex w-[24px] pl-[2px]"><SignalIcon kind={s.kind} /></div>
                  <div className="w-[77px] pt-[1px]"><Fit w={s.nw}>{s.name}</Fit></div>
                  <div className="flex w-[72px] justify-center pt-[1px]"><Fit w={s.vw}>{s.value}</Fit></div>
                </div>
              ))}
            </div>
            <div className="mt-[540px] h-[10px] bg-[#f4f4f4]" />
          </div>
        </div>
        <div className="flex w-[7px] items-center justify-center">
          <div className="h-[10px] w-[2px] border-l border-dotted border-[#999]" />
        </div>
        <div className="mt-[2px] flex h-[930px] w-[1727px] flex-col border border-[#bcbcbc] bg-[#f4f4f4]">
          <div className="flex h-[918px]">
            <div className="h-full w-[1715px] bg-[linear-gradient(180deg,#f1f1f1_0px,#f1f1f1_19px,#b8b8b8_19px,#b8b8b8_20px,#ffffff_20px)]"><Waves /></div>
          </div>
        </div>
      </div>
    </div>
  );
}

export default function App() {
  return (
    <div className="h-[1542px] w-[4096px] overflow-hidden bg-black">
      <div className="flex h-[1687px] w-[4480px] bg-black [zoom:0.9142857]">
        <div className="flex w-[2560px] flex-col pt-[87px]">
          <MainWindow />
          <div className="h-[1px] bg-[#4c5557]" />
          <div className="w-[1706.667px] [zoom:1.5]"><Taskbar tray /></div>
        </div>
        <div className="flex w-[1920px] flex-col">
          <TimingWindow />
          <Taskbar />
        </div>
      </div>
    </div>
  );
}
